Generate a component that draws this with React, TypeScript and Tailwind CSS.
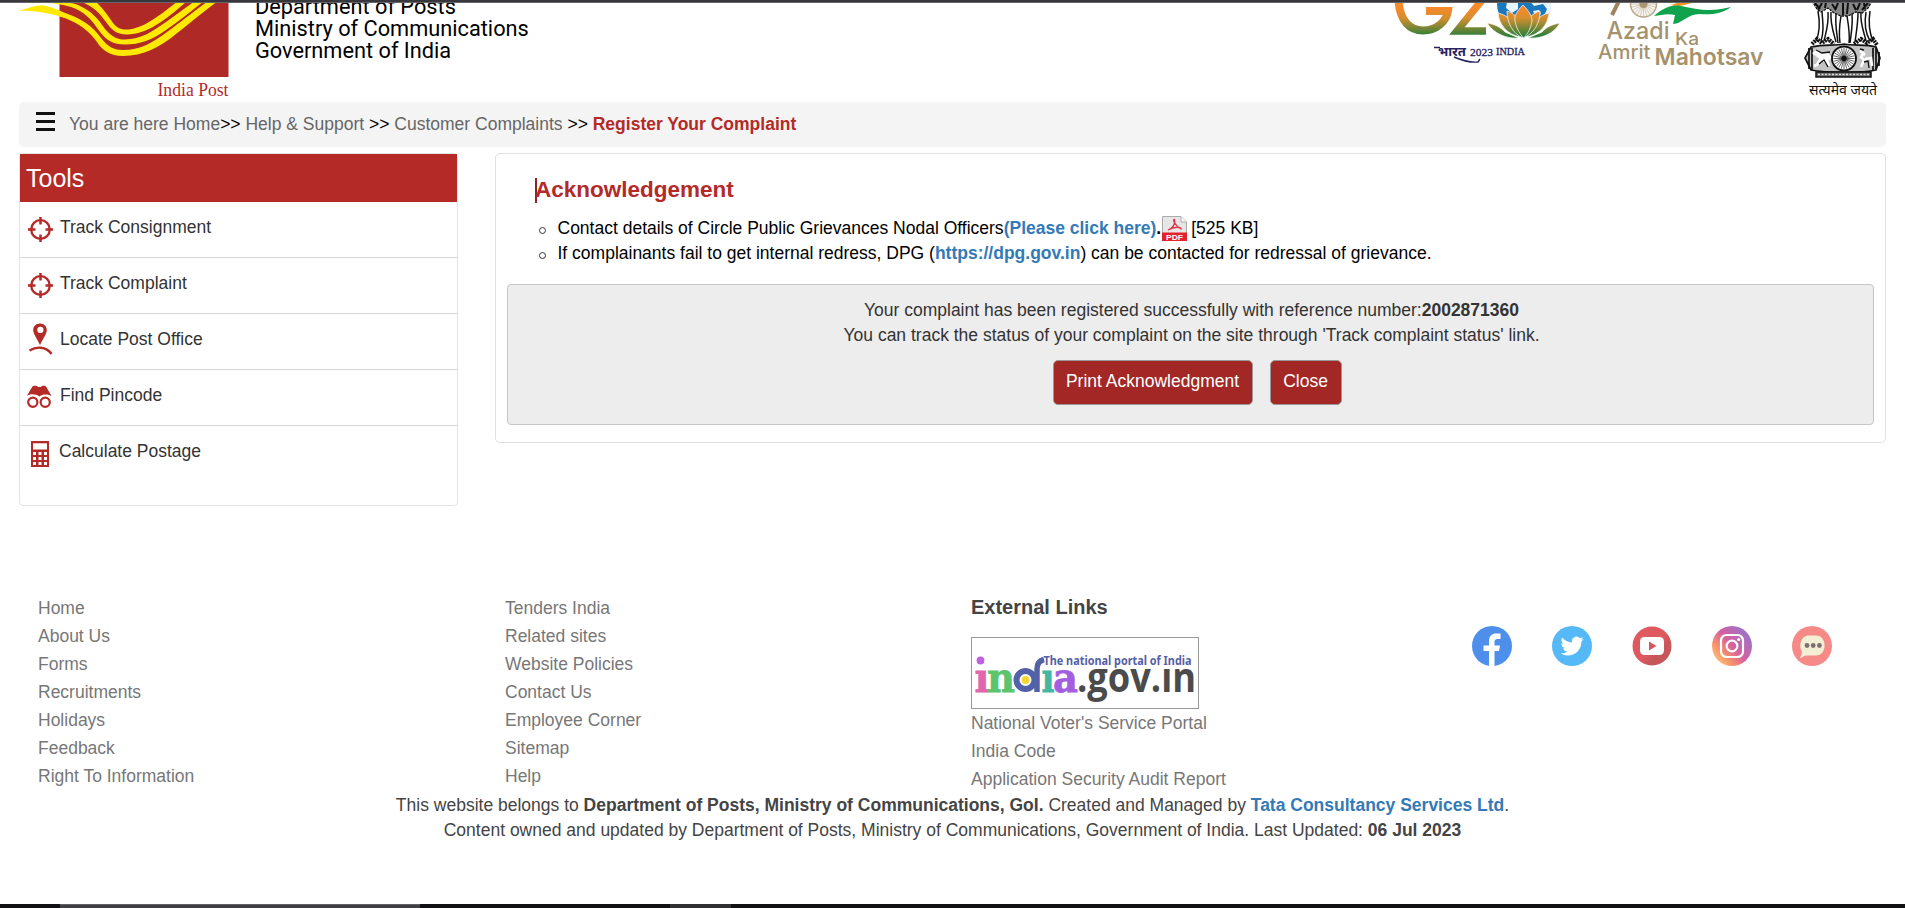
import type { ReactNode } from "react";

const RED = "#b42a26";

function IndiaPostLogo() {
  return (
    <svg width="212" height="99" viewBox="18 3 212 99" className="shrink-0">
      <rect x="59.5" y="0" width="169" height="77" fill="#af2a26" />
      <g fill="#ffe900">
        <path d="M19 10.8C28 8 36 5 42 5.2C50 6 56 9 64 12.500C80 18 93 26 101 38C108 47 114 50 123 50C140 50 152 43 167 32C183 20 196 10 208 1H218C204 11 190 23 176 34C160 47 143 56 123 56C110 56 102 50 97 42C89 31 80 24 66 18.500C50 13 35 10.500 19 10.800Z" />
        <path d="M47 2.500C58 2.500 72 2 78 5C92 11 99 20 105 29C112 37 117 39.500 125 39.500C141 39.500 153 31 166 22L195 1H204C190 12 178 22 166 30C152 40 140 44.500 125 44.500C113 44.500 106 40 100 32C92 20 84 11 71 7C62 4 55 4 47 2.500Z" />
        <path d="M79 1H95C103 8 108 16 113 23C118 29 122 30 129 29.500C143 28 158 17 178 1H187C168 18 148 34.500 127 34.500C116 34.500 111 29 106 22C99 12 91 5 79 1Z" />
      </g>
      <text x="157.500" y="95.500" fontSize="18.500" textLength="71" lengthAdjust="spacingAndGlyphs" fill="#b42a26" fontFamily="'Liberation Serif', serif">
        India Post
      </text>
    </svg>
  );
}

function G20Logo() {
  return (
    <svg width="170" height="99" viewBox="1393 3 170 99" className="shrink-0">
      <defs>
        <linearGradient id="tri" gradientUnits="userSpaceOnUse" x1="0" y1="8" x2="0" y2="36">
          <stop offset="0" stopColor="#f6892a" />
          <stop offset="0.350" stopColor="#d88f2e" />
          <stop offset="1" stopColor="#2b7f3b" />
        </linearGradient>
      </defs>
      <circle cx="1524" cy="4" r="27" fill="#1a78c0" />
      <path d="M1497 0L1507 2L1506 8L1512 13L1518 9V3L1514 0ZM1529 0L1534 6L1543 4L1547 9L1544 16L1551 12V0ZM1533 11L1539 10L1541 14L1536 17Z" fill="#e9f5fb" />
      <g fill="none" stroke="url(#tri)">
        <path d="M1398.500 1C1400 21 1410 30.500 1423 30.500C1437 30.500 1446.500 21 1448 11H1426" strokeWidth="8" />
        <path d="M1482 0L1457 31H1486" strokeWidth="7.500" />
      </g>
      <g fill="url(#tri)" stroke="#fff" strokeWidth="0.700">
        <path d="M1487 23C1494 24 1501 27 1505 32L1519 38C1507 39 1494 34 1487 23Z" />
        <path d="M1560 23C1553 24 1546 27 1542 32L1528 38C1541 39 1554 34 1560 23Z" />
        <path d="M1498 13C1508 15 1517 24 1520 37C1507 34 1499 25 1498 13Z" />
        <path d="M1549 13C1539 15 1530 24 1527 37C1540 34 1548 25 1549 13Z" />
        <path d="M1507 11C1515 13 1521 21 1523 30L1523 38C1513 34 1507 23 1507 11ZM1540 11C1532 13 1525 21 1523 30L1523 38C1534 34 1540 23 1540 11Z" />
        <path d="M1523 5C1517 11 1514 16 1515 21C1516 28 1520 34 1523.500 38C1528 34 1531 28 1532 21C1532 16 1529 11 1523 5Z" />
      </g>
      <g fill="#26245f" fontFamily="'Liberation Serif', 'Noto Sans Devanagari', 'Noto Sans', serif">
        <text x="1438" y="56" fontSize="13" textLength="28" lengthAdjust="spacingAndGlyphs" fontWeight="700">भारत</text>
        <text x="1470" y="55.500" fontSize="11" textLength="23" lengthAdjust="spacingAndGlyphs" stroke="#26245f" strokeWidth="0.300">2023</text>
        <text x="1496" y="54.500" fontSize="10.500" textLength="29" lengthAdjust="spacingAndGlyphs" stroke="#26245f" strokeWidth="0.300">INDIA</text>
      </g>
      <path d="M1434 47.500H1440M1454 57C1461 60 1469 63 1478 62L1480 59" fill="none" stroke="#26245f" strokeWidth="1.400" />
    </svg>
  );
}

const ticks = Array.from({ length: 24 }, (_, i) => (i * Math.PI) / 12);

function AzadiLogo() {
  return (
    <svg width="172" height="99" viewBox="1594 3 172 99" className="shrink-0">
      <path d="M1619 1L1612 15" stroke="#9e835c" strokeWidth="4" />
      <circle cx="1643.500" cy="4" r="13" fill="#faf7f2" stroke="#b9a78b" strokeWidth="1.500" />
      {ticks.map((a) => (
        <line key={a} x1="1643.500" y1="4" x2={1643.5 + 12.5 * Math.cos(a)} y2={4 + 12.5 * Math.sin(a)} stroke="#b9a78b" strokeWidth="0.600" />
      ))}
      <circle cx="1643.500" cy="4" r="4" fill="#ab9570" />
      <path d="M1671 5C1680 8 1690 3 1698 1H1683Z" fill="#f7941e" />
      <path d="M1654 16C1662 9 1671 4 1681 6C1698 10 1712 12 1731 7C1722 14 1710 15 1700 14C1687 14 1682 24 1673 24L1675 15C1667 13 1662 15 1654 16Z" fill="#0fa34e" />
      <g fill="#a5926c" fontFamily="Inter, Lato, sans-serif">
        <text x="1606.500" y="39" fontSize="24" fontWeight="500" textLength="63" lengthAdjust="spacingAndGlyphs">Azadi</text>
        <text x="1675" y="45" fontSize="17.500" fontWeight="500" textLength="24" lengthAdjust="spacingAndGlyphs">Ka</text>
        <text x="1598" y="59" fontSize="20" fontWeight="500" textLength="52.500" lengthAdjust="spacingAndGlyphs">Amrit</text>
        <text x="1654.500" y="65" fontSize="23" fontWeight="600" textLength="109" lengthAdjust="spacingAndGlyphs">Mahotsav</text>
      </g>
    </svg>
  );
}

function Emblem() {
  return (
    <svg width="82" height="99" viewBox="1802 3 82 99" className="shrink-0">
      <g stroke="#111" fill="none" strokeWidth="1.300">
        <path d="M1812 1L1817 9L1821 12L1828 8L1834 13L1841 16L1848 16L1856 12L1862 13L1868 8L1872 1Z" fill="#888" strokeDasharray="2.500 1" />
        <path d="M1815 3L1820 9M1822 3L1818 10M1826 2L1825 8M1832 4L1836 10M1838 3L1835 10M1843 3V15M1848 3L1847 14M1853 4L1856 10M1860 3L1857 10M1864 3L1865 9M1868 3L1862 10" strokeWidth="2" />
        <path d="M1818 11C1820 22 1820 32 1816 41M1822 12C1823 24 1824 32 1821 41M1828 12C1829 24 1826 32 1824 41M1831 12C1830 24 1834 34 1836 42M1836 14C1835 26 1837 34 1838 43M1841 16C1839 28 1839 36 1840 43M1847 16C1849 28 1850 36 1849 43M1852 14C1853 26 1851 34 1850 43M1858 12C1858 24 1856 34 1855 42M1861 12C1860 24 1864 32 1866 41M1866 12C1864 24 1866 34 1870 41M1870 11C1868 24 1870 34 1873 41" strokeWidth="1.500" />
        <path d="M1812 44L1817 39L1822 43L1828 39L1834 44M1854 44L1861 39L1867 43L1873 39L1877 45" strokeWidth="4" strokeDasharray="2 0.800" />
        <path d="M1811 47C1825 44 1832 46 1844 44C1856 46 1866 44 1876 47L1880 58L1876 70C1864 73 1826 73 1811 70L1805 58Z" fill="#c4c4c4" strokeWidth="1.700" />
        <path d="M1809 48V69M1812 48V70M1873 48V70M1876 48V69M1879 52V66" strokeWidth="1.700" />
        <path d="M1813 54L1817 51L1820 55L1827 54L1831 58L1827 59L1829 66M1821 58L1817 65L1814 66" fill="#fff" stroke="#fff" strokeWidth="2.600" />
        <path d="M1864 52L1861 57L1864 60L1861 67M1865 59L1871 58L1872 66M1860 51L1865 55" stroke="#fff" strokeWidth="2.600" />
        <path d="M1816 50L1822 53L1830 52M1819 64L1824 60L1828 67M1860 49L1864 50M1864 62L1868 61L1869 68" />
        <circle cx="1844" cy="58.500" r="12" fill="#fff" strokeWidth="1.900" />
        {ticks.map((a) => (
          <line key={a} x1="1844" y1="58.500" x2={1844 + 10.5 * Math.cos(a)} y2={58.5 + 10.5 * Math.sin(a)} strokeWidth="0.650" />
        ))}
        <circle cx="1844" cy="58.500" r="2" fill="#111" />
        <path d="M1816 72H1871V77H1816Z" fill="#666" strokeWidth="1.500" />
        <path d="M1818 74.500H1870" stroke="#ddd" strokeWidth="1.500" strokeDasharray="2 1.500" />
      </g>
      <text x="1809" y="95" fontSize="15" textLength="68" lengthAdjust="spacingAndGlyphs" fill="#111" fontFamily="'Noto Sans Devanagari', 'Noto Sans', sans-serif">
        सत्यमेव जयते
      </text>
    </svg>
  );
}

function Crosshair() {
  return (
    <svg width="25" height="25" viewBox="0 0 25 25" fill="none" stroke={RED} className="block">
      <circle cx="12.500" cy="12.500" r="9.300" strokeWidth="2.300" />
      <path d="M12.500 0V7.500M12.500 17.500V25M0 12.500H7.500M17.500 12.500H25" strokeWidth="2.500" />
    </svg>
  );
}

function Pin() {
  return (
    <svg width="25" height="32" viewBox="0 0 25 32" className="block">
      <path fillRule="evenodd" d="M12 0.500C8 0.500 5.200 3.400 5.200 7C5.200 10.500 9 16 12 22C15 16 18.800 10.500 18.800 7C18.800 3.400 16 0.500 12 0.500ZM12.400 3.800A3.100 3.100 0 1 1 12.400 10A3.100 3.100 0 1 1 12.400 3.800Z" fill={RED} />
      <path d="M1.500 27.500C8 23.500 18 23 23.500 31" fill="none" stroke={RED} strokeWidth="2.300" />
    </svg>
  );
}

function Binoculars() {
  return (
    <svg width="25" height="24" viewBox="0 0 25 24" className="block">
      <path d="M0 11C1.500 8 4 4 5.500 1.500C6 0.300 10.500 0.300 11 2H14C14.500 0.300 18.500 0.300 19 1.500L24.500 11C22 9.500 16 8.500 12.500 11.500C9 9 3 8.500 0 11Z" fill={RED} />
      <circle cx="5.800" cy="17.300" r="4.600" fill="none" stroke={RED} strokeWidth="2.200" />
      <circle cx="18.200" cy="17.300" r="4.600" fill="none" stroke={RED} strokeWidth="2.200" />
    </svg>
  );
}

function Calculator() {
  return (
    <svg width="18" height="26" viewBox="0 0 18 26" className="block">
      <path d="M0 0H18V26H0Z" fill={RED} />
      <path d="M2 2.300H16V8.500H2Z" fill="#fff" />
      <path d="M2 11H5V14H2ZM7.500 11H10.500V14H7.500ZM13 11H16V14H13ZM2 16H5V19H2ZM7.500 16H10.500V19H7.500ZM13 16H16V19H13ZM2 21H5V24H2ZM7.500 21H10.500V24H7.500ZM13 21H16V24H13Z" fill="#fff" />
    </svg>
  );
}

function Tool({ icon, label, box, last }: { icon: ReactNode; label: string; box: string; last?: boolean }) {
  return (
    <li className={last ? "flex h-[79px]" : "flex h-[56px] border-b border-[#d5d5df]"}>
      <span className={box}>{icon}</span>
      <span className="pt-[13px]">{label}</span>
    </li>
  );
}

function PdfIcon() {
  return (
    <svg width="25" height="25" viewBox="0 0 25 25" className="mr-[2px] ml-[1px] block">
      <path d="M0.500 0.500H19L24.500 6V24.500H0.500Z" fill="#e6e6e6" stroke="#aaa" />
      <path d="M19 0.500V6H24.500" fill="#fff" stroke="#aaa" />
      <path d="M6 14C11 12 14 7 12.500 3.500C10.500 3 12 9 19 13C20 11 12 10 6 14Z" fill="none" stroke="#dd3344" strokeWidth="1.300" />
      <path d="M0 16.500H25V25H0Z" fill="#e2222d" />
      <text x="4" y="23.800" fontSize="7.500" fontWeight="700" textLength="17" lengthAdjust="spacingAndGlyphs" fill="#fff" fontFamily="'Liberation Sans', sans-serif">PDF</text>
    </svg>
  );
}

function NationalPortal() {
  return (
    <div className="h-[72px] w-[228px] border border-[#999]">
      <svg width="226" height="70" viewBox="1 1 226 70" className="block">
        <g fontFamily="'DejaVu Serif', serif" fontWeight="700" fontSize="41">
          <text x="3.500" y="54.500" textLength="15" lengthAdjust="spacingAndGlyphs" fill="#e067ac" stroke="#e067ac" strokeWidth="0.800">ı</text>
          <text x="16" y="54.500" textLength="28" lengthAdjust="spacingAndGlyphs" fill="#5bc46c" stroke="#5bc46c" strokeWidth="0.800">n</text>
          <text x="70.500" y="54.500" textLength="13" lengthAdjust="spacingAndGlyphs" fill="#44b7a3" stroke="#44b7a3" strokeWidth="0.800">ı</text>
          <text x="82" y="54.500" textLength="25" lengthAdjust="spacingAndGlyphs" fill="#a45fe0" stroke="#a45fe0" strokeWidth="0.800">a</text>
        </g>
        <circle cx="9.500" cy="23.500" r="3.900" fill="#bd60e4" />
        <circle cx="54.500" cy="43" r="9" fill="none" stroke="#5361a8" strokeWidth="6" />
        <path d="M66 55V32C66 26 69 23.500 73 22.500" fill="none" stroke="#5361a8" strokeWidth="5.500" />
        <circle cx="54.500" cy="43" r="3.900" fill="#fbd536" />
        <text x="106" y="54.500" fontSize="42" fontWeight="700" textLength="119" lengthAdjust="spacingAndGlyphs" fill="#4b4b4b" fontFamily="'Open Sans', sans-serif">.gov.ın</text>
        <text x="72.500" y="27.500" fontSize="11.500" fontWeight="700" textLength="148" lengthAdjust="spacingAndGlyphs" fill="#5560a5" fontFamily="'Noto Sans', sans-serif">The national portal of India</text>
      </svg>
    </div>
  );
}

function Socials() {
  return (
    <div className="mt-[33px] ml-[34px] flex gap-[40px]">
      <svg width="40" height="40" viewBox="0 0 40 40">
        <circle cx="20" cy="20" r="20" fill="#4f8fec" />
        <path d="M17 40V25H11.500V19.500H17V15C17 10 20 7.500 24 7.500H28.500V13H25.500C23 13 22.500 14.500 22.500 16V19.500H28L27 25H22.500V40Z" fill="#fff" />
      </svg>
      <svg width="40" height="40" viewBox="0 0 40 40">
        <circle cx="20" cy="20" r="20" fill="#55b8f7" />
        <path transform="translate(8.500 8.500) scale(0.970)" d="M23.950 4.570a10 10 0 0 1-2.820.770 4.960 4.960 0 0 0 2.160-2.720c-.95.550-2 .950-3.130 1.180a4.920 4.920 0 0 0-8.380 4.480C7.690 8.100 4.070 6.130 1.640 3.160a4.820 4.820 0 0 0-.67 2.480c0 1.710.870 3.210 2.190 4.100a4.900 4.900 0 0 1-2.230-.62v.060a4.920 4.920 0 0 0 3.950 4.830 5 5 0 0 1-2.210.080 4.940 4.940 0 0 0 4.600 3.420A9.870 9.870 0 0 1 0 19.540a14 14 0 0 0 7.550 2.210c9.050 0 14-7.500 14-13.980 0-.21 0-.42-.02-.63a9.940 9.940 0 0 0 2.420-2.570Z" fill="#fff" />
      </svg>
      <svg width="40" height="40" viewBox="0 0 40 40">
        <defs>
          <linearGradient id="yt" x1="0" y1="0" x2="1" y2="1">
            <stop offset="0.500" stopColor="#df5a60" />
            <stop offset="0.700" stopColor="#c5565a" />
          </linearGradient>
        </defs>
        <circle cx="20" cy="20" r="19.500" fill="url(#yt)" />
        <rect x="8" y="11" width="24" height="18" rx="4.500" fill="#fff" />
        <path d="M17 15.500L24.500 20L17 24.500Z" fill="#d4575c" />
      </svg>
      <svg width="40" height="40" viewBox="0 0 40 40">
        <defs>
          <linearGradient id="ig" x1="0.100" y1="0.900" x2="0.900" y2="0.200">
            <stop offset="0" stopColor="#fdc378" />
            <stop offset="0.250" stopColor="#f9936a" />
            <stop offset="0.550" stopColor="#d560a0" />
            <stop offset="1" stopColor="#9a73c8" />
          </linearGradient>
        </defs>
        <circle cx="20" cy="20" r="20" fill="url(#ig)" />
        <rect x="9" y="9" width="22" height="22" rx="5.500" fill="none" stroke="#fff" strokeWidth="2.200" />
        <circle cx="20" cy="20" r="5.400" fill="none" stroke="#fff" strokeWidth="2.200" />
        <circle cx="26.700" cy="13.500" r="1.600" fill="#fff" />
      </svg>
      <svg width="40" height="40" viewBox="0 0 40 40">
        <circle cx="20" cy="20" r="20" fill="#f58a89" />
        <path d="M17 9.500H24C35.500 9.500 35.500 29.500 24 29.500H14C11.500 29.500 10 32 8.500 32C8 31 10 28 10 26C6.500 20 8.500 9.500 17 9.500Z" fill="#f3efd5" />
        <g fill="#7d6f72">
          <circle cx="15" cy="19.500" r="2.400" />
          <circle cx="21.200" cy="19.500" r="2.400" />
          <circle cx="27.400" cy="19.500" r="2.400" />
        </g>
      </svg>
    </div>
  );
}

function Links({ items }: { items: string[] }) {
  return (
    <ul className="leading-[28px]">
      {items.map((t) => (
        <li key={t}>{t}</li>
      ))}
    </ul>
  );
}

export default function App() {
  return (
    <div className="flex h-[908px] w-[1905px] flex-col overflow-hidden bg-white font-['Liberation_Sans',Arial,sans-serif] text-[17.5px] leading-[25px] text-[#333]">
      <div className="h-[3px] shrink-0 border-b border-[#66666a] bg-[#38383c]" />

      <header className="flex h-[99px] shrink-0 items-start overflow-hidden pl-[18px]">
        <IndiaPostLogo />
        <div className="-mt-[7px] ml-[25px] w-[400px] font-[Roboto,sans-serif] text-[21.75px] leading-[22px] text-black">
          <p>Department of Posts</p>
          <p>Ministry of Communications</p>
          <p>Government of India</p>
        </div>
        <div className="ml-auto flex pr-[21px]">
          <G20Logo />
          <div className="w-[31px]" />
          <AzadiLogo />
          <div className="w-[36px]" />
          <Emblem />
        </div>
      </header>

      <nav className="mr-[19px] ml-[19px] flex h-[45px] shrink-0 rounded-[5px] bg-[#f4f4f4] pl-[17px] whitespace-pre text-black">
        <div className="mt-[10px] flex w-[19px] flex-col gap-[5px]">
          <i className="h-[3px] bg-[#111]" />
          <i className="h-[3px] bg-[#111]" />
          <i className="h-[3px] bg-[#111]" />
        </div>
        <p className="mt-[10px] ml-[14px]">
          <span className="text-[#666]">You are here Home</span>&gt;&gt; <span className="text-[#666]">Help &amp; Support</span> &gt;&gt;{" "}
          <span className="text-[#666]">Customer Complaints</span> &gt;&gt; <b className="text-[#b42a26]">Register Your Complaint</b>
        </p>
      </nav>

      <div className="mt-[6px] flex h-[440px] shrink-0 items-start gap-[37px] px-[19px]">
        <aside className="w-[439px] shrink-0 rounded-[4px] border border-[#e4e4e6]">
          <h2 className="h-[48px] bg-[#b42a26] pt-[10px] pl-[6px] text-[25px] leading-[28px] text-white">Tools</h2>
          <ul>
            <Tool icon={<Crosshair />} label="Track Consignment" box="w-[40px] pt-[15px] pl-[8px]" />
            <Tool icon={<Crosshair />} label="Track Complaint" box="w-[40px] pt-[15px] pl-[8px]" />
            <Tool icon={<Pin />} label="Locate Post Office" box="w-[40px] pt-[9px] pl-[8px]" />
            <Tool icon={<Binoculars />} label="Find Pincode" box="w-[40px] pt-[15px] pl-[7px]" />
            <Tool icon={<Calculator />} label="Calculate Postage" box="w-[39px] pt-[15px] pl-[11px]" last />
          </ul>
        </aside>

        <main className="h-[290px] grow rounded-[5px] border border-[#e0e0e0] px-[11px] pt-[24px]">
          <h1 className="ml-[28px] flex h-[25px] items-center border-l-2 border-[#8f2420] text-[22.5px] leading-[24px] font-bold text-[#b42a26]">
            <span className="-mt-[1px] -ml-[2px]">Acknowledgement</span>
          </h1>
          <ul className="mt-[13px] ml-[31px] text-black">
            <li className="flex h-[25px] items-center">
              <i className="mt-[3px] mr-[11.5px] ml-[1px] size-[7px] rounded-full border-[1.5px] border-[#333]" />
              Contact details of Circle Public Grievances Nodal Officers
              <b className="text-[#337ab7]">(Please click here)</b>
              <b>.</b>
              <PdfIcon />
              <span className="ml-[2px]">[525 KB]</span>
            </li>
            <li className="flex h-[25px] items-center">
              <i className="mt-[3px] mr-[11.5px] ml-[1px] size-[7px] rounded-full border-[1.5px] border-[#333]" />
              <span>
                If complainants fail to get internal redress, DPG (<b className="text-[#337ab7]">https://dpg.gov.in</b>) can be contacted for redressal of grievance.
              </span>
            </li>
          </ul>
          <section className="mt-[18px] h-[141px] rounded-[4px] border border-[#c6c6c6] bg-[#ededed] pt-[13px] text-center">
            <p className="pl-[2px]">
              Your complaint has been registered successfully with reference number:<b>2002871360</b>
            </p>
            <p className="pl-[2px]">You can track the status of your complaint on the site through 'Track complaint status' link.</p>
            <div className="mt-[12px] flex justify-center gap-[17px] pl-[13px]">
              <button className="h-[45px] w-[200px] rounded-[5px] border border-[#999] bg-[#a32725] pb-[2px] text-white">Print Acknowledgment</button>
              <button className="h-[45px] w-[72px] rounded-[5px] border border-[#999] bg-[#a32725] pb-[2px] text-white">Close</button>
            </div>
          </section>
        </main>
      </div>

      <footer className="flex h-[311px] shrink-0 flex-col">
        <div className="flex h-[200px] pl-[38px] text-[#777]">
          <div className="w-[467px] pt-[1px]">
            <Links items={["Home", "About Us", "Forms", "Recruitments", "Holidays", "Feedback", "Right To Information"]} />
          </div>
          <div className="w-[466px] pt-[1px]">
            <Links items={["Tenders India", "Related sites", "Website Policies", "Contact Us", "Employee Corner", "Sitemap", "Help"]} />
          </div>
          <div className="w-[467px]">
            <h3 className="h-[44px] text-[20px] leading-[28px] font-bold text-[#444]">External Links</h3>
            <NationalPortal />
            <Links items={["National Voter's Service Portal", "India Code", "Application Security Audit Report"]} />
          </div>
          <Socials />
        </div>
        <div className="text-center text-[#444]">
          <p>
            This website belongs to <b>Department of Posts, Ministry of Communications, GoI.</b> Created and Managed by <b className="text-[#337ab7]">Tata Consultancy Services Ltd</b>.
          </p>
          <p>
            Content owned and updated by Department of Posts, Ministry of Communications, Government of India. Last Updated: <b>06 Jul 2023</b>
          </p>
        </div>
      </footer>

      <div className="flex h-[4px] shrink-0 bg-[#111114]">
        <div className="ml-[60px] h-full w-[360px] border-t border-[#626266] bg-[#3f3f43]" />
        <div className="ml-[250px] h-full w-[61px] bg-[#303033]" />
      </div>
    </div>
  );
}
